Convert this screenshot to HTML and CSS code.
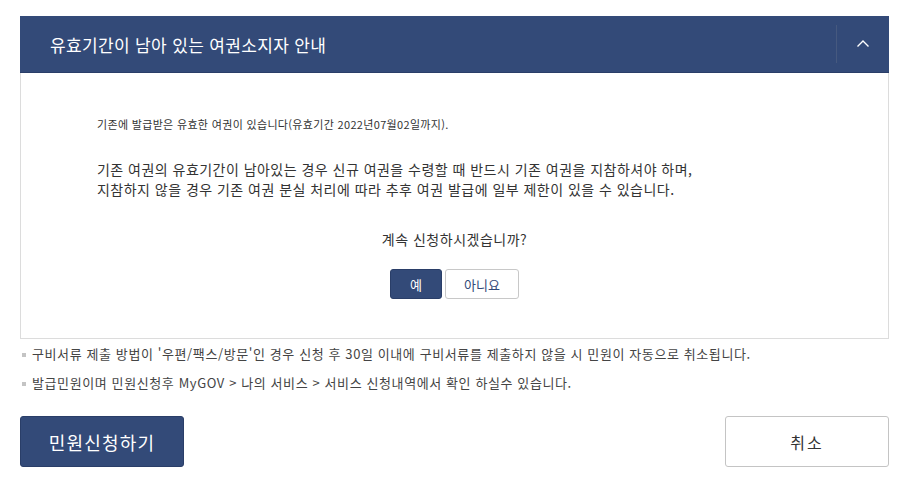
FILE: index.html
```html
<!DOCTYPE html>
<html lang="ko">
<head>
<meta charset="utf-8">
<link rel="stylesheet" href="styles.css">
</head>
<body>
<div class="page">
  <section class="panel">
    <div class="panel-head">
      <h2 class="panel-title">유효기간이 남아 있는 여권소지자 안내</h2>
      <button class="toggle" aria-label="접기">
        <svg width="14" height="9" viewBox="0 0 14 9"><path d="M1.5 7.5 L7 2 L12.5 7.5" fill="none" stroke="#fff" stroke-width="1.4"/></svg>
      </button>
    </div>
    <div class="panel-body">
      <p class="note">기존에 발급받은 유효한 여권이 있습니다(유효기간 2022년07월02일까지).</p>
      <p class="desc">기존 여권의 유효기간이 남아있는 경우 신규 여권을 수령할 때 반드시 기존 여권을 지참하셔야 하며,<br>지참하지 않을 경우 기존 여권 분실 처리에 따라 추후 여권 발급에 일부 제한이 있을 수 있습니다.</p>
      <p class="question">계속 신청하시겠습니까?</p>
      <div class="choice">
        <button class="btn-yes">예</button>
        <button class="btn-no">아니요</button>
      </div>
    </div>
  </section>
  <ul class="bullets">
    <li>구비서류 제출 방법이 '우편/팩스/방문'인 경우 신청 후 30일 이내에 구비서류를 제출하지 않을 시 민원이 자동으로 취소됩니다.</li>
    <li>발급민원이며 민원신청후 MyGOV &gt; 나의 서비스 &gt; 서비스 신청내역에서 확인 하실수 있습니다.</li>
  </ul>
  <div class="actions">
    <button class="btn-primary">민원신청하기</button>
    <button class="btn-cancel">취소</button>
  </div>
</div>
</body>
</html>
```
FILE: styles.css
```css
* { box-sizing: border-box; }
body {
  margin: 0;
  background: #fff;
  font-family: "Noto Sans CJK KR", "Noto Sans", sans-serif;
  color: #333;
}
p { margin: 0; }
button { font-family: inherit; cursor: pointer; }
.page {
  width: 869px;
  margin: 16px 0 0 20px;
}
.panel-head {
  height: 57px;
  background: #334a78;
  border-bottom: 1px solid #2a3e68;
  display: flex;
  align-items: center;
  padding-left: 30px;
}
.panel-title {
  flex: 1;
  margin: 0;
  font-size: 17px;
  font-weight: 400;
  color: #fff;
  letter-spacing: 0.35px;
}
.toggle {
  width: 53px;
  height: 38px;
  border: 0;
  border-left: 1px solid #46597f;
  background: transparent;
  display: flex;
  align-items: center;
  justify-content: center;
  padding: 0;
  padding-bottom: 2px;
}
.panel-body {
  border: 1px solid #dcdcdc;
  border-top: 0;
  padding: 43px 20px 39px 76px;
}
.note {
  font-size: 11px;
  line-height: 16px;
  letter-spacing: 0.33px;
}
.desc {
  margin-top: 27px;
  font-size: 14px;
  line-height: 20px;
  letter-spacing: 0.47px;
}
.question {
  margin: 30px 0 0 -56px;
  text-align: center;
  font-size: 14px;
  line-height: 20px;
  letter-spacing: 0.5px;
}
.choice {
  margin: 20px 0 0 -56px;
  display: flex;
  justify-content: center;
  gap: 3px;
}
.btn-yes, .btn-no {
  height: 30px;
  font-size: 13px;
  border-radius: 3px;
  padding: 0;
}
.btn-yes {
  width: 52px;
  background: #334a78;
  border: 1px solid #2a3e68;
  color: #fff;
}
.btn-no {
  width: 74px;
  background: #fff;
  border: 1px solid #c8c8c8;
  color: #334a78;
}
.bullets {
  list-style: none;
  margin: 5px 0 0;
  padding: 0;
}
.bullets li {
  position: relative;
  padding-left: 12px;
  font-size: 13px;
  line-height: 20px;
  color: #444;
  letter-spacing: 0.6px;
}
.bullets li + li { margin-top: 9px; }
.bullets li::before {
  content: "";
  position: absolute;
  left: 2px;
  top: 9px;
  width: 4px;
  height: 4px;
  background: #c4c4c4;
}
.actions {
  margin-top: 23px;
  display: flex;
  justify-content: space-between;
}
.btn-primary, .btn-cancel {
  width: 164px;
  height: 51px;
  border-radius: 3px;
  padding: 0;
}
.btn-primary {
  background: #334a78;
  border: 1px solid #2a3e68;
  color: #fff;
  font-size: 18px;
  letter-spacing: 1.2px;
}
.btn-cancel {
  background: #fff;
  border: 1px solid #c4c4c4;
  color: #333;
  font-size: 16px;
  letter-spacing: 2px;
}
```
